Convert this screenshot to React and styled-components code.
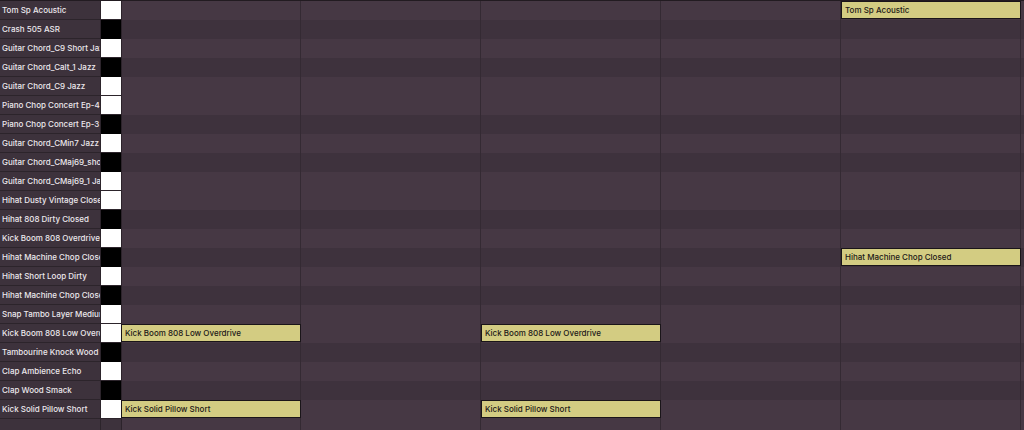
import React from "react";
import styled, { createGlobalStyle } from "styled-components";

const GlobalStyle = createGlobalStyle`
  html, body {
    margin: 0;
    padding: 0;
    background: #2a2229;
    overflow: hidden;
  }
  body {
    font-family: "Inter", "Liberation Sans", sans-serif;
  }
`;

const rows = [
  { name: "Tom Sp Acoustic", black: false },
  { name: "Crash 505 ASR", black: true },
  { name: "Guitar Chord_C9 Short Jazz", black: false },
  { name: "Guitar Chord_Calt_1 Jazz", black: true },
  { name: "Guitar Chord_C9 Jazz", black: false },
  { name: "Piano Chop Concert Ep-4", black: false },
  { name: "Piano Chop Concert Ep-3", black: true },
  { name: "Guitar Chord_CMin7 Jazz", black: false },
  { name: "Guitar Chord_CMaj69_short", black: true },
  { name: "Guitar Chord_CMaj69_1 Jazz", black: false },
  { name: "Hihat Dusty Vintage Closed", black: false },
  { name: "Hihat 808 Dirty Closed", black: true },
  { name: "Kick Boom 808 Overdrive 1", black: false },
  { name: "Hihat Machine Chop Closed", black: true },
  { name: "Hihat Short Loop Dirty", black: false },
  { name: "Hihat Machine Chop Closed", black: true },
  { name: "Snap Tambo Layer Medium", black: false },
  { name: "Kick Boom 808 Low Overdrive", black: false },
  { name: "Tambourine Knock Wood Short", black: true },
  { name: "Clap Ambience Echo", black: false },
  { name: "Clap Wood Smack", black: true },
  { name: "Kick Solid Pillow Short", black: false },
  { name: "", black: false, empty: true },
];

// note cells: row index -> list of beat columns (0-based)
const notes = {
  0: [4],
  13: [4],
  17: [0, 2],
  21: [0, 2],
};

const Roll = styled.div`
  height: 430px;
  overflow: hidden;
  border-top: 1px solid #221b21;
  display: flex;
  flex-direction: column;
`;

const Row = styled.div`
  display: grid;
  grid-template-columns: 101px 20px 1fr;
  height: 19px;
  flex: none;
`;

const Label = styled.div`
  box-sizing: border-box;
  background: #3d323c;
  border-bottom: 1px solid #2c242b;
  border-right: 1px solid #2c242b;
  color: #ece8ec;
  font-size: 8px;
  font-weight: 500;
  line-height: 18px;
  padding-left: 2px;
  white-space: nowrap;
  overflow: hidden;
`;

const Key = styled.div`
  box-sizing: border-box;
  background: ${(p) => (p.$empty ? "#3d323c" : p.$black ? "#000" : "#fff")};
  border-bottom: 1px solid ${(p) => (p.$black ? "#000" : "#2c242b")};
`;

const Lane = styled.div`
  box-sizing: border-box;
  border-left: 1px solid #2c232b;
  background-color: ${(p) => (p.$black ? "#3e323d" : "#463844")};
  background-image: repeating-linear-gradient(
    to right,
    transparent 0,
    transparent 178px,
    #342a33 178px,
    #342a33 179px,
    transparent 179px,
    transparent 180px
  );
  display: grid;
  grid-template-columns: repeat(5, 180px) 1fr;
  align-items: stretch;
`;

const Note = styled.div`
  grid-column: ${(p) => p.$col + 1};
  grid-row: 1;
  box-sizing: border-box;
  margin: 0 1px 1px -1px;
  background: #d3cc82;
  border: 1px solid #1a1519;
  color: #1c1818;
  font-size: 8px;
  font-weight: 500;
  line-height: 16px;
  padding-left: 3px;
  white-space: nowrap;
  overflow: hidden;
`;

export default function App() {
  return (
    <>
      <GlobalStyle />
      <Roll>
        {rows.map((r, i) => (
          <Row key={i}>
            <Label>{r.name}</Label>
            <Key $black={r.black} $empty={r.empty} />
            <Lane $black={r.black}>
              {(notes[i] || []).map((c) => (
                <Note key={c} $col={c}>
                  {r.name}
                </Note>
              ))}
            </Lane>
          </Row>
        ))}
      </Roll>
    </>
  );
}
